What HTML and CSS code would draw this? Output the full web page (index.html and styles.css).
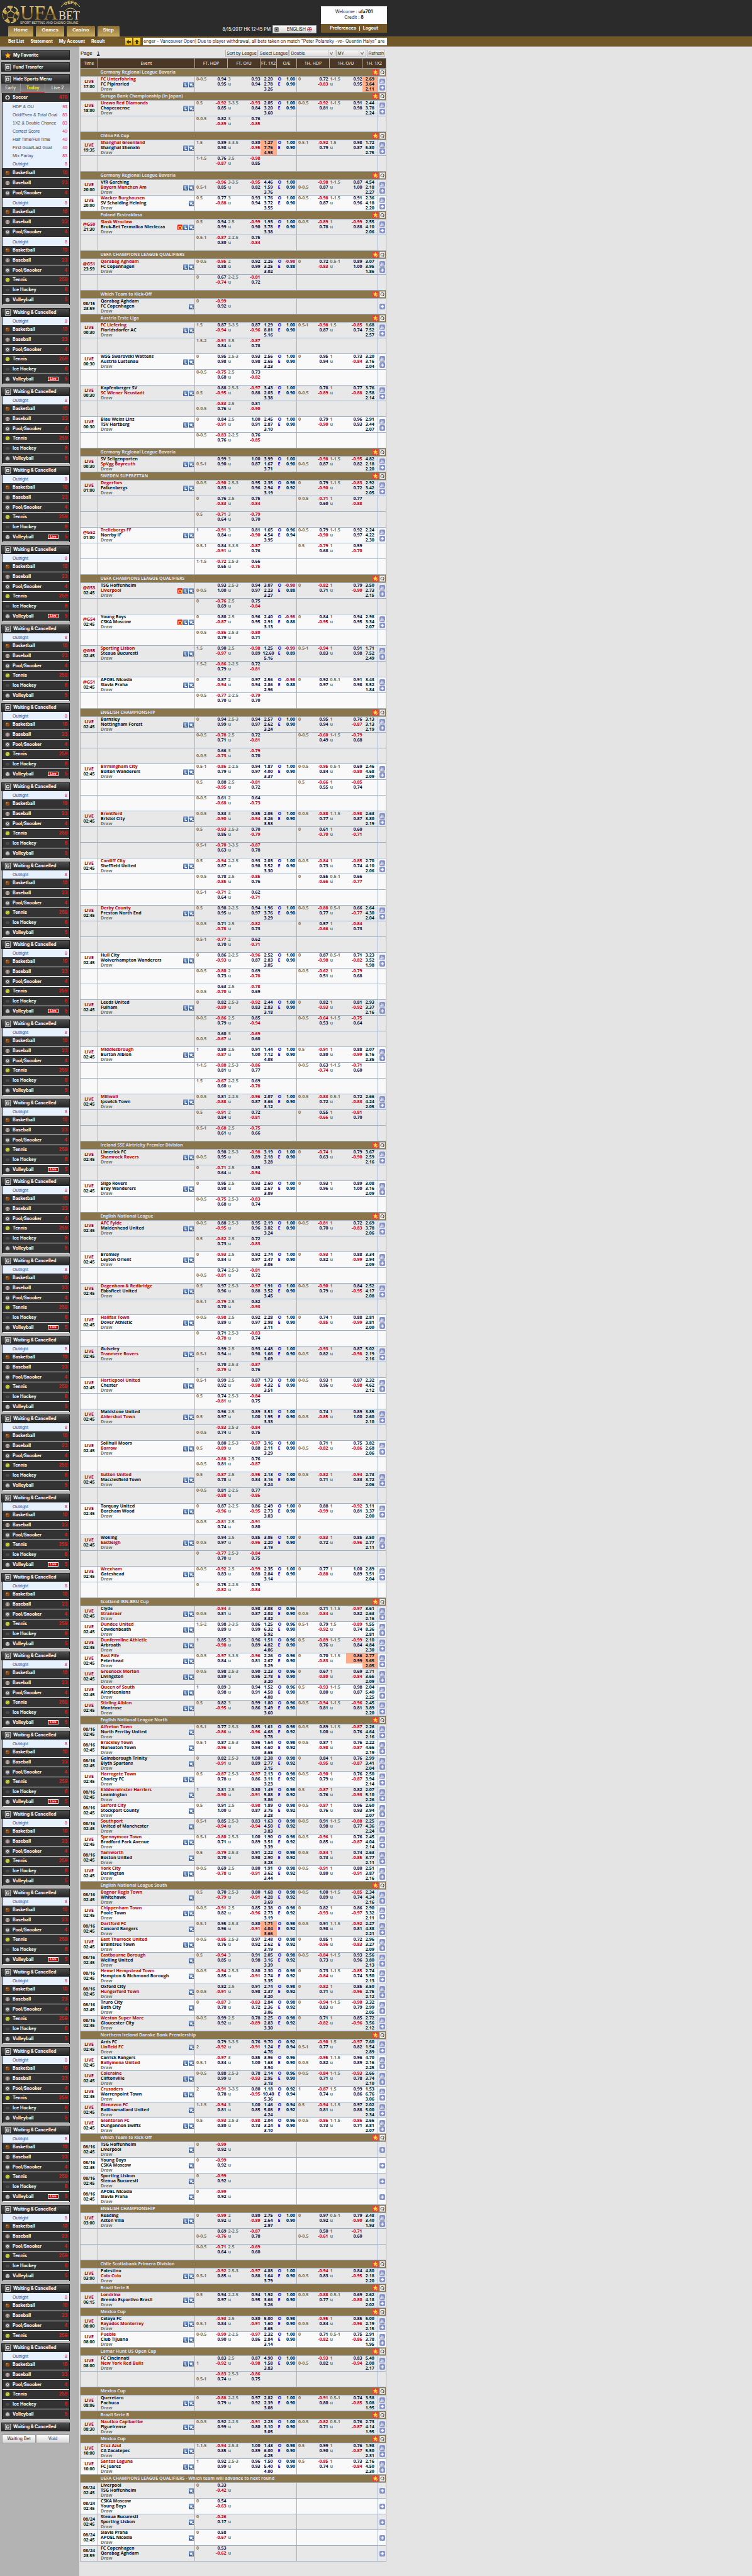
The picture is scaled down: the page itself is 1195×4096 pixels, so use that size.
FILE: index.html
```html
<!DOCTYPE html>
<html lang="en">
<head>
<meta charset="utf-8">
<title>UFABET - Sport betting and casino online</title>
<link rel="stylesheet" href="styles.css">
</head>
<body>
<svg class="defs" width="0" height="0" aria-hidden="true">
  <defs>
    <linearGradient id="gold" x1="0" y1="0" x2="0" y2="1">
      <stop offset="0" stop-color="#f3e3a0"/><stop offset=".45" stop-color="#d0ad52"/><stop offset=".6" stop-color="#7d5a1c"/><stop offset="1" stop-color="#ecd583"/>
    </linearGradient>
    <linearGradient id="blue" x1="0" y1="0" x2="0" y2="1">
      <stop offset="0" stop-color="#7f9ccb"/><stop offset="1" stop-color="#2f5590"/>
    </linearGradient>
  </defs>
  <symbol id="i-star" viewBox="0 0 13 14"><rect width="13" height="14" rx="1.5" fill="url(#blue)"/><path d="M6 1.5 7.3 5l3.7.1-2.9 2.3 1 3.6L6 8.9 3 11l1-3.600L1 5.100 4.700 5z" fill="#fff"/><path d="M8 10.500h5M10.500 8v5" stroke="#2f5590" stroke-width="3"/><path d="M8 10.500h5M10.500 8v5" stroke="#fff" stroke-width="1.500"/></symbol>
  <symbol id="i-l" viewBox="0 0 13 14"><rect width="13" height="14" rx="1.500" fill="url(#blue)"/><path d="M5 3v7.500h5" fill="none" stroke="#fff" stroke-width="1.800"/></symbol>
  <symbol id="i-tv" viewBox="0 0 13 14"><rect width="13" height="14" rx="1.500" fill="#e31b1b"/><path d="M2.500 5.500h8v6h-8zM4 2.500l1.500 3M9 2.500 7.500 5.500" fill="none" stroke="#ffd84a" stroke-width="1.600"/></symbol>
  <symbol id="i-stat" viewBox="0 0 14 14"><rect width="14" height="14" rx="3" fill="#8592cc"/><path d="M3 12V8M6 12V4M9 12V6M12 12v-2" stroke="#fff" stroke-width="1.700"/></symbol>
  <symbol id="i-plus" viewBox="0 0 14 14"><rect width="14" height="14" rx="3" fill="#8592cc"/><path d="M3 7h8M7 3v8" stroke="#fff" stroke-width="2.200"/></symbol>
  <symbol id="i-fav" viewBox="0 0 13 14"><rect width="13" height="14" rx="1" fill="#e8413f"/><path d="M6.500 1 8 5l4 .2-3.100 2.500L10 12 6.500 9.700 3 12l1.100-4.300L1 5.200 5 5z" fill="#ffe536"/><path d="m7 10 2 2 3-4" stroke="#ffe9a0" stroke-width="1.200" fill="none"/></symbol>
  <symbol id="i-refresh" viewBox="0 0 14 15"><rect x=".5" y=".5" width="13" height="14" fill="#f4f4f4" stroke="#c2c2c2"/><path d="M5 11.500C1.500 8 3.500 3.500 7 3.500s5.500 4 2.500 7" fill="none" stroke="#444" stroke-width="1.600"/><path d="M7.500 8v4h4z" fill="#444"/></symbol>
  <symbol id="i-down" viewBox="0 0 14 14"><rect x="1" y="1" width="12" height="12" fill="#333" stroke="#fff"/><rect x="3.500" y="3.500" width="7" height="7" fill="#eee"/><path d="M4.500 6h5L7 9z" fill="#222"/></symbol>
  <symbol id="i-right" viewBox="0 0 14 14"><rect x="1" y="1" width="12" height="12" fill="#333" stroke="#fff"/><rect x="3.500" y="3.500" width="7" height="7" fill="#eee"/><path d="M5.500 4.500v5L9 7z" fill="#222"/></symbol>
  <symbol id="i-gold" viewBox="0 0 18 18"><path d="m9 1 2.400 5.400 5.800.6-4.300 4 1.200 5.800L9 13.900 3.900 16.800 5.100 11 .8 7l5.800-.6z" fill="#ffb52b" stroke="#e87f10"/></symbol>
  <symbol id="b-soccer" viewBox="0 0 12 12"><circle cx="6" cy="6" r="5.500" fill="#ddd"/><path d="m6 3.500 2.500 1.800-1 3h-3l-1-3zM1 4l2-2M9 2l2 2M4 11h4" fill="#333" stroke="#333" stroke-width="1.200"/></symbol>
  <symbol id="b-basketball" viewBox="0 0 12 12"><circle cx="6" cy="6" r="5" fill="#9a5418"/><circle cx="4.500" cy="4" r="2" fill="#dc9a4c"/><path d="M1 6h10M6 1v10" stroke="#5a2b08" stroke-width=".7"/></symbol>
  <symbol id="b-baseball" viewBox="0 0 12 12"><circle cx="6" cy="6" r="5" fill="#b9aca8"/><path d="M3 2q3 4 0 8M9 2q-3 4 0 8" fill="none" stroke="#94605c" stroke-width=".8"/></symbol>
  <symbol id="b-pool" viewBox="0 0 12 12"><circle cx="6" cy="6" r="5.500" fill="#777"/><circle cx="6" cy="5.500" r="3" fill="#eee"/><circle cx="6" cy="5.500" r="1.200" fill="#333"/></symbol>
  <symbol id="b-tennis" viewBox="0 0 12 12"><circle cx="6" cy="6" r="5" fill="#b6c12c"/><path d="M2 8q4 0 7-5" fill="none" stroke="#eef3b0"/></symbol>
  <symbol id="b-hockey" viewBox="0 0 12 12"><ellipse cx="6" cy="6" rx="5" ry="3.500" fill="#4b4b4b"/></symbol>
  <symbol id="b-volley" viewBox="0 0 12 12"><circle cx="6" cy="6" r="5" fill="#a9a9a9"/><path d="M2 8q4-1 4-7M6 6q3 0 5 2" fill="none" stroke="#eee"/></symbol>
</svg>

<header class="head">
  <div class="head-in">
    <div class="brand">
      <svg class="logo" viewBox="0 0 134 41" role="img" aria-label="UFABET">
        <g fill="none" stroke="url(#gold)" stroke-width="1.500">
          <circle cx="17" cy="23" r="13" stroke-dasharray="9 2"/>
          <path d="m17 17 6 4-2 7h-8l-2-7zM17 17v-6M23 21l6-2M21 28l4 5M13 28l-4 5M11 21l-6-2"/>
        </g>
        <path d="m12 12 4-3 5 2-4 4zM5 20l3-5 3 3-2 5zM26 16l3 4-1 5-4-4zM9 30l4 0 3 5-5 0zM20 32l4-3 2 2-3 4z" fill="#c9a64c"/>
        <text x="32" y="31" class="l-ufa">UFA</text>
        <text x="93" y="31" class="l-bet">BET</text>
        <path d="M97 11A18 18 0 0 1 127 11" fill="none" stroke="#d8bd68"/>
        <path id="arc" d="M99 19A13 13 0 0 1 125 19" fill="none"/>
        <path d="M104 17A10 10 0 0 1 120 17" fill="none" stroke="#d8bd68"/>
        <text class="l-arc"><textPath href="#arc" startOffset="50%">UEFA</textPath></text>
        <text x="32" y="38" class="l-tag">SPORT BETTING AND CASINO ONLINE</text>
      </svg>
      <nav class="tabs"><a href="#">Home</a><a href="#">Games</a><a href="#">Casino</a><a href="#">Step</a></nav>
    </div>
    <div class="clock">
      <span>8/15/2017 HK 12:45 PM</span>
      <button type="button" class="lang">
        <svg class="lang-arrow" viewBox="0 0 8 10"><rect x=".5" y=".5" width="7" height="9" rx="1" fill="#8a8a8a" stroke="#555"/><path d="M3 3v4l2.500-2z" fill="#111"/></svg>
        <span>ENGLISH</span>
        <svg class="flag" viewBox="0 0 12 10"><rect width="12" height="10" fill="#28408c"/><path d="m0 0 12 10M12 0 0 10" stroke="#fff" stroke-width="2"/><path d="M6 0v10M0 5h12" stroke="#fff" stroke-width="3.500"/><path d="M6 0v10M0 5h12" stroke="#d0202c" stroke-width="2"/></svg>
      </button>
    </div>
    <div class="user">
      <div class="user-info"><div>Welcome : <b>ufa701</b></div><div>Credit : <b>8</b></div></div>
      <div class="user-links"><a href="#">Preferences</a><i></i><a href="#">Logout</a></div>
    </div>
  </div>
</header>
<div class="bar">
  <div class="bar-in">
    <nav class="menu"><a href="#">Bet List</a><a href="#">Statement</a><a href="#">My Account</a><a href="#">Result</a></nav>
    <div class="arrows">
      <button type="button" aria-label="Previous"><svg viewBox="0 0 10 10"><path d="M1 5l4-4v2.500h4v3H5V9z" fill="#3a2c00"/></svg></button>
      <button type="button" aria-label="Up"><svg viewBox="0 0 10 10"><path d="M5 1l4 4H6.500v4h-3V5H1z" fill="#3a2c00"/></svg></button>
    </div>
    <div class="ticker">enger - Vancouver Open] Due to player withdrawal, all bets taken on match "Peter Polansky -vs- Quentin Halys" are</div>
  </div>
</div>

<div class="page">
  <aside class="side" id="side">
    <a class="side-btn" href="#"><svg><use href="#i-gold"/></svg>My Favorite</a>
    <a class="side-btn" href="#"><svg><use href="#i-down"/></svg>Fund Transfer</a>
    <div class="sports">
      <a class="side-btn" href="#"><svg><use href="#i-right"/></svg>Hide Sports Menu</a>
      <div class="modes"><a href="#">Early</a><a href="#" class="on">Today</a><a href="#">Live 2</a></div>
    </div>
  </aside>
  <main class="main">
    <div class="tools">
      <span class="pager">Page <a href="#">1</a></span>
      <button type="button">Sort by League</button>
      <button type="button">Select League</button>
      <span class="pick wide"><select aria-label="View"><option>Double</option></select><svg viewBox="0 0 8 8"><path d="M2 2.500 4 6l2-3.500" fill="none" stroke="#777"/></svg></span>
      <span class="pick"><select aria-label="Odds type"><option>MY</option></select><svg viewBox="0 0 8 8"><path d="M2 2.500 4 6l2-3.500" fill="none" stroke="#777"/></svg></span>
      <button type="button">Refresh</button>
    </div>
    <table class="odds">
      <colgroup><col class="c-time"><col class="c-event"><col class="c-pair"><col class="c-pair"><col class="c-x"><col class="c-oe"><col class="c-pair"><col class="c-pair"><col class="c-hx"><col class="c-more"></colgroup>
      <thead><tr><th>Time</th><th>Event</th><th>FT. HDP</th><th>FT. O/U</th><th>FT. 1X2</th><th>O/E</th><th>1H. HDP</th><th>1H. O/U</th><th colspan="2">1H. 1X2</th></tr></thead>
      <tbody id="rows"></tbody>
    </table>
  </main>
</div>
<script src="app.js"></script>
</body>
</html>
```
FILE: styles.css
```css
* { box-sizing: border-box; }
body { margin: 0; min-height: 100vh; display: flex; flex-direction: column; background: #e4e4e4; font: 7px/8px Inter, "Liberation Sans", sans-serif; color: #222; }
a { color: inherit; text-decoration: none; }
button, select { font: inherit; color: inherit; margin: 0; }
svg { display: block; }
.defs { position: absolute; }

/* header */
.head { background: #2b2b2b; }
.head-in, .bar-in { max-width: 615px; display: flex; }
.head-in { align-items: flex-end; }
.brand { flex: 1; }
.logo { width: 134px; height: 41px; }
.l-ufa { font: 31px "Liberation Serif", serif; fill: url(#gold); }
.l-bet { font: 18px "Liberation Serif", serif; fill: #e6dcc0; }
.l-arc { font: bold 7px "Liberation Sans", sans-serif; fill: #e0c878; text-anchor: middle; }
.l-tag { font: 5px "Liberation Sans", sans-serif; fill: #e9e3d2; }
.tabs { display: flex; gap: 4px; padding-left: 13px; font: bold 8px/14px "Liberation Sans", sans-serif; color: #fff; }
.tabs a { height: 17px; padding: 0 9px; border-radius: 2px 2px 0 0; background: linear-gradient(#8a6a35, #c9ad62); }
.clock { display: flex; align-items: center; gap: 3px; padding-bottom: 5px; color: #fff; }
.lang { display: flex; align-items: center; width: 70px; height: 13px; padding: 0 2px; border: 1px solid #aaa; background: linear-gradient(#fafafa, #d8d8d8); color: #222; }
.lang-arrow { width: 7px; height: 8px; }
.lang span { flex: 1; text-align: right; padding-right: 2px; }
.flag { width: 8px; height: 7px; margin-right: 4px; }
.user { width: 105px; margin-left: 7px; padding-bottom: 6px; text-align: center; }
.user-info { padding: 5px 0; background: #fff; line-height: 8px; }
.user-info div { padding-bottom: 1px; }
.user-links { display: flex; justify-content: center; align-items: center; gap: 5px; height: 14px; background: #725728; color: #fff; font-weight: bold; }
.user-links i { width: 1px; height: 7px; background: #fff; }

.bar { background: #725728; border-top: 1px solid #7f6230; border-bottom: 1px solid #73502a; }
.bar-in { height: 14px; align-items: center; }
.menu { display: flex; gap: 10px; width: 199px; padding-left: 13px; color: #fff; font-weight: bold; white-space: nowrap; }
.arrows { display: flex; gap: 2px; width: 28px; }
.arrows button { width: 11px; height: 12px; padding: 1px; border: 0; background: linear-gradient(#ffe04a, #d9a400); }
.arrows svg { width: 9px; height: 9px; }
.ticker { flex: 1; height: 12px; line-height: 12px; background: #fff; overflow: hidden; white-space: nowrap; padding-left: 1px; }

/* sidebar */
.page { flex: 1; display: grid; grid-template-columns: 126px 1fr; }
.side { display: flex; flex-direction: column; padding: 6px 15px 0 2px; background: #b3b3b3; }
.side-btn { display: flex; align-items: center; gap: 3px; height: 15px; margin-bottom: 4px; padding-left: 4px; border: 1px solid #222; background: linear-gradient(#4d4d4d, #242424); color: #fff; font-weight: bold; }
.side-btn svg { width: 11px; height: 10px; }
.modes { display: grid; grid-template-columns: 3fr 4fr 4fr; height: 15px; line-height: 14px; background: linear-gradient(#6a6a6a, #8d8d8d); color: #fff; text-align: center; }
.modes a + a { border-left: 1px solid #999; }
.modes .on { color: #f4e800; font-weight: bold; border-bottom: 2px solid #e00000; }
.sports .side-btn, .group .side-btn { margin-bottom: 0; }
.group .side-btn { height: 14px; }
.group { margin-bottom: 5px; }
.group:nth-child(3n) { margin-bottom: 4px; }
.list { margin-left: 1px; border: solid #111; border-width: 0 1px; background: #333; }
.sub { display: flex; justify-content: space-between; height: 13px; line-height: 13px; padding: 0 3px 0 16px; background: #e6f1fd; color: #444; white-space: nowrap; font-family: "Liberation Sans", sans-serif; }
.sub em, .sport em { font-style: normal; color: #f01818; }
.rows { display: grid; grid-auto-rows: 1fr; }
.rows.n6 { height: 94px; }
.rows.n4 { height: 63px; }
.rows.n3 { height: 49px; }
.rows.n1 { height: 15px; }
.sport { display: flex; align-items: center; border-bottom: 1px solid #fff; padding: 0 3px 0 4px; color: #fff; font-weight: bold; }
.sport svg { width: 8px; height: 8px; margin-right: 4px; }
.sport em { margin-left: auto; min-width: 14px; text-align: right; }
.live { margin-left: auto; width: 17px; height: 7px; background: #e00000; border: 1px solid #fff; font: bold 5px/5px "Liberation Sans", sans-serif; text-align: center; }
.live + em { margin-left: 0; }
.ends { display: grid; grid-template-columns: 1fr 1fr; margin-left: 1px; }
.ends button { height: 14px; padding: 0; border: 1px solid #999; background: linear-gradient(#fff, #d8d8d8); }

/* odds table */
.main { padding: 5px 0 16px 1px; }
.tools { display: flex; align-items: center; gap: 1px; width: 485px; height: 11px; margin-bottom: 2px; font-family: "Liberation Sans", sans-serif; }
.tools > button, .pick { height: 11px; border: 1px solid #b5b5b5; background: linear-gradient(#f8f8f8, #dcdcdc); padding: 0 1px; white-space: nowrap; }
.pager { flex: 1; font-size: 8px; color: #000; padding-left: 1px; }
.pager a { text-decoration: underline; margin-left: 5px; }
.pick { display: flex; align-items: center; width: 48px; }
.pick.wide { width: 73px; }
.pick select { flex: 1; min-width: 0; height: 9px; padding: 0; border: 0; background: none; appearance: none; }
.pick svg { width: 10px; height: 9px; border-left: 1px solid #c4c4c4; }

.odds { width: 487px; table-layout: fixed; border-collapse: collapse; font: bold 7px/8px "Open Sans", "Noto Sans", sans-serif; color: #001028; }
.c-time { width: 28px; }
.c-event { width: 154px; }
.c-pair { width: 52px; }
.c-x { width: 26px; }
.c-oe { width: 32px; }
.c-hx { width: 25px; }
.c-more { width: 13px; }
.odds th { height: 16px; padding: 0; border: 1px solid #9fb0c6; background: #4b3726; color: #fff; font: 7px/8px "Open Sans", sans-serif; white-space: nowrap; }
.odds td { padding: 0; vertical-align: top; border-top: 1px solid #9fb0c6; border-bottom: 1px solid #9fb0c6; }
.league { height: 13px; background: #8b754b; color: #dfe3f5; }
.league td { vertical-align: middle; }
.league td:first-child { border-left: 1px solid #9fb0c6; }
.league td:last-child { border-right: 1px solid #9fb0c6; }
.league div { display: flex; align-items: center; height: 12px; padding-left: 4px; }
.league span { flex: 1; }
.league button { width: 10px; height: 10px; padding: 0; border: 0; background: none; margin-left: 1px; }
.league svg { width: 9px; height: 10px; }
.game { height: 25px; background: #e8e8e8; }
.game.alt { background: #f9f9f9; }
.game .edge { border-left: 1px solid #9fb0c6; }
.game .more { border-right: 1px solid #9fb0c6; }
.game .time { vertical-align: middle; text-align: center; }
.neg { color: #b40000; }
.event { display: flex; align-items: center; height: 24px; padding: 0 1px 0 4px; white-space: nowrap; }
.names { flex: 1; }
.mute, .ln { color: #707070; }
.event button, .more button { width: 8px; height: 9px; padding: 0; border: 0; background: none; margin-left: 1px; }
.event button svg, .more button svg { width: 100%; height: 9px; }
.pair { display: grid; grid-template-columns: 1fr 1fr; grid-auto-rows: 8px; padding: 0 2px; }
.pair.ou { padding: 0 0 0 1px; }
.pair a { text-align: right; }
.pair .ln { white-space: nowrap; }
.pair .o { color: #0a0ae6; }
.x { display: grid; grid-auto-rows: 8px; text-align: center; }
.hot { background: #ffad89; }
.more div { display: flex; flex-direction: column; align-items: center; justify-content: center; gap: 1px; height: 24px; }
.more button { width: 9px; margin: 0; }
```
FILE: app.js
```js
/* League lines start with "#", extra price lines with "+".
   Match: time | home | away | icons | hdp | ou | 1x2 | odd/even | 1H hdp | 1H ou | 1H 1x2
   "*" marks the favourite, "~" puts the handicap beside the away side, "!" highlights a changed price. */
const data = `
#Germany Regional League Bavaria
LIVE 17:00|*FC Unterfohring|FC Pipinsried|LS|0-0.5 .94 .95|3 .93 .94|2.20 2.78 3.26|1 .9|0 .72 -.83|1-1.5 .92 .95|2.69 3.64 2.11!
#Suruga Bank Championship (in Japan)
LIVE 18:00|*Urawa Red Diamonds|Chapecoense|LS|0.5 -.92 .85|3-3.5 -.93 .84|2.05 3.20 3.60|1 .9|0-0.5 -.92 .81|1-1.5 .91 .98|2.44 3.78 2.24
+|0-0.5 .82 -.89|3 .76 -.85
#China FA Cup
LIVE 19:35|*Shanghai Greenland|Shanghai Shenxin|LS|1.5 .89 .98|3-3.5 .80 -.95|1.27 7.76 4.98!|1 .9|0.5-1 -.92 .79|1.5 .98 .87|1.72 5.80 2.75
+|1-1.5 .76 -.87|3.5 -.98 .85
#Germany Regional League Bavaria
LIVE 20:00|VfR Garching|*Bayern Munchen Am|LS|~0.5-1 -.96 .85|3-3.5 -.95 .82|4.46 1.59 3.76|1 .9|~0-0.5 -.98 .87|1-1.5 .87 1|4.54 2.18 2.27
LIVE 20:00|*Wacker Burghausen|SV Schalding Heining|S|0.5 .77 -.88|3 .93 .94|1.76 3.72 3.55|1 .9|0-0.5 -.98 .87|1-1.5 .91 .96|2.36 4.18 2.20
#Poland Ekstraklasa
@G50 21:30|*Slask Wroclaw|Bruk-Bet Termalica Nieciecza|TLS|0.5 .94 .99|2.5 -.99 .90|1.93 3.78 3.38|1 .9|0-0.5 -.89 .78|1 -.99 .88|2.55 4.10 2.06
+|0.5-1 -.87 .80|2-2.5 .75 -.84
#UEFA CHAMPIONS LEAGUE QUALIFIERS
@G51 23:59|*Qarabag Aghdam|FC Copenhagen|LS|0-0.5 -.95 .88|2 .92 .99|2.26 3.25 3.02|-.98 .88|0 .72 -.83|0.5-1 .89 1|3.07 3.95 1.86
+|0 .67 -.74|2-2.5 -.81 .72
#Which Team to Kick-Off
08/15 23:59|Qarabag Aghdam|FC Copenhagen|S|0 -.99 .92|u
#Austria Erste Liga
LIVE 00:30|*FC Liefering|Floridsdorfer AC|LS|1.5 .87 -.94|3-3.5 .87 -.96|1.29 8.81 5.16|1 .9|0.5-1 -.98 .87|1.5 -.85 .74|1.68 7.52 2.57
+|1.5-2 -.91 .84|3.5 -.87 .78
LIVE 00:30|WSG Swarovski Wattens|Austria Lustenau|LS|0 .95 .98|2.5-3 .93 .98|2.56 2.65 3.23|1 .9|0 .95 .94|1 .73 -.84|3.20 3.16 2.04
+|0-0.5 -.75 .68|2.5 .73 -.82
LIVE 00:30|Kapfenberger SV|*SC Wiener Neustadt|LS|~0.5 .88 -.95|2.5-3 -.97 .88|3.43 2.03 3.38|1 .9|~0-0.5 .78 -.89|1 .77 -.88|3.76 2.58 2.14
+|~0-0.5 -.83 .76|2.5 .81 -.90
LIVE 00:30|Blau Weiss Linz|TSV Hartberg|LS|0 .84 -.91|2.5 1 .91|2.45 2.87 3.10|1 .9|0 .79 -.90|1 .96 .93|2.91 3.44 2.07
+|0-0.5 -.83 .76|2-2.5 .76 -.85
#Germany Regional League Bavaria
LIVE 00:30|SV Seligenporten|*SpVgg Bayreuth|LS|~0.5-1 .99 .90|3 1 .87|3.99 1.67 3.71|1 .9|~0-0.5 -.98 .87|1-1.5 -.95 .82|4.82 2.18 2.20
#SWEDEN SUPERETTAN
LIVE 01:00|*Degerfors|Falkenbergs|LS|0-0.5 -.90 .83|2.5-3 .95 .96|2.35 2.94 3.19|.98 .92|0 .79 -.90|1-1.5 -.83 .72|2.92 3.42 2.05
+|0 .76 -.83|2.5 .75 -.84|0-0.5 -.71 .60|1 .77 -.88
+|0.5 -.71 .64|3 -.79 .70
@G52 01:00|*Trelleborgs FF|Norrby IF|LS|1 -.91 .84|3 .81 -.90|1.65 4.54 3.95|.96 .94|0-0.5 .79 -.90|1-1.5 .92 .97|2.24 4.22 2.30
+|0.5-1 .84 -.91|3-3.5 -.87 .76|0.5 -.79 .68|1 .59 -.70
+|1-1.5 -.72 .65|2.5-3 .66 -.75
#UEFA CHAMPIONS LEAGUE QUALIFIERS
@G53 02:45|TSG Hoffenheim|*Liverpool|TLS|~0-0.5 .93 1|2.5-3 .94 .97|3.07 2.23 3.27|-.98 .88|0 -.82 .71|1 .79 -.90|3.50 2.73 2.15
+|0 -.76 .69|2.5 .75 -.84
@G54 02:45|Young Boys|CSKA Moscow|TLS|0 .80 -.87|2.5 .96 .95|2.40 2.91 3.13|-.98 .88|0 .84 -.95|1 .94 .95|2.98 3.34 2.07
+|0-0.5 -.86 .79|2.5-3 -.80 .71
@G55 02:45|*Sporting Lisbon|Steaua Bucuresti|LS|1.5 .90 -.97|2.5 -.98 .89|1.25 12.60 5.16|-.99 .89|0.5-1 -.94 .83|1 .91 .98|1.71 7.52 2.49
+|1.5-2 -.86 .79|2-2.5 .72 -.81
@G51 02:45|APOEL Nicosia|Slavia Praha|LS|0 .87 -.94|2 .97 .94|2.56 2.86 2.96|-.98 .88|0 .92 .97|0.5-1 .91 .98|3.43 3.52 1.84
+|0-0.5 -.77 .70|2-2.5 -.79 .70
#ENGLISH CHAMPIONSHIP
LIVE 02:45|Barnsley|Nottingham Forest|LS|0 .94 .99|2.5-3 .94 .97|2.57 2.62 3.24|1 .9|0 .95 .94|1 .76 -.87|3.13 3.13 2.19
+|0-0.5 -.78 .71|2.5 .72 -.81|0-0.5 -.60 .49|1-1.5 -.79 .68
+|~0-0.5 .66 -.73|3 -.79 .70
LIVE 02:45|*Birmingham City|Bolton Wanderers|LS|0.5-1 -.86 .79|2-2.5 .94 .97|1.87 4.00 3.37|1 .9|0-0.5 -.95 .84|0.5-1 .69 -.80|2.46 4.68 2.09
+|0.5 .88 -.95|2.5 -.81 .72|0.5 -.66 .55|1 -.85 .74
+|0-0.5 .61 -.68|2 .64 -.73
LIVE 02:45|*Brentford|Bristol City|LS|0-0.5 .83 -.90|3 .85 -.94|2.05 3.26 3.53|1 .9|0-0.5 -.88 .77|1-1.5 -.98 .87|2.63 3.80 2.19
+|0.5 -.93 .86|2.5-3 .70 -.79|0 .61 -.70|1 .60 -.71
+|0.5-1 -.70 .63|3-3.5 -.87 .78
LIVE 02:45|*Cardiff City|Sheffield United|LS|0.5 -.94 .87|2-2.5 .93 .98|2.03 3.52 3.30|1 .9|0-0.5 -.84 .73|1 -.85 .74|2.70 4.10 2.06
+|0-0.5 .78 -.85|2.5 -.85 .76|0 .55 -.66|0.5-1 .66 -.77
+|0.5-1 -.71 .64|2 .62 -.71
LIVE 02:45|*Derby County|Preston North End|LS|0.5 .98 .95|2-2.5 .94 .97|1.96 3.76 3.29|1 .9|0-0.5 -.88 .77|0.5-1 .66 -.77|2.64 4.30 2.04
+|0-0.5 .71 -.78|2.5 -.82 .73|0 .57 -.66|1 -.84 .73
+|0.5-1 -.77 .70|2 .62 -.71
LIVE 02:45|Hull City|Wolverhampton Wanderers|LS|0 .86 -.93|2-2.5 -.96 .87|2.52 2.83 3.05|1 .9|0 .87 -.98|0.5-1 .71 -.82|3.23 3.52 1.98
+|0-0.5 -.80 .73|2 .69 -.78|0-0.5 -.62 .51|1 -.79 .68
+|~0-0.5 .63 -.70|2.5 -.78 .69
LIVE 02:45|Leeds United|Fulham|LS|0 .82 -.89|2.5-3 -.92 .83|2.44 2.83 3.18|1 .9|0 .82 -.93|1 .81 -.92|2.93 3.37 2.16
+|0-0.5 -.86 .79|2.5 .85 -.94|0-0.5 -.64 .53|1-1.5 -.75 .64
+|~0-0.5 .60 -.67|3 -.69 .60
LIVE 02:45|*Middlesbrough|Burton Albion|LS|1 .80 -.87|2.5 .91 1|1.44 7.12 4.08|1 .9|0.5 -.91 .80|1 .88 -.99|2.07 5.16 2.35
+|1-1.5 -.88 .81|2.5-3 -.86 .77|0-0.5 .63 -.74|1-1.5 -.71 .60
+|1.5 -.67 .60|2-2.5 .69 -.78
LIVE 02:45|*Millwall|Ipswich Town|LS|0-0.5 .81 -.88|2-2.5 -.96 .87|2.07 3.66 3.12|1 .9|0-0.5 -.83 .72|0.5-1 .72 -.83|2.66 4.24 2.05
+|0.5 -.91 .84|2 .72 -.81|0 .55 -.66|1 -.81 .70
+|0.5-1 -.68 .61|2.5 -.75 .66
#Ireland SSE Airtricity Premier Division
LIVE 02:45|Limerick FC|*Shamrock Rovers|LS|~0-0.5 .98 .95|2.5-3 -.98 .89|3.19 2.18 3.28|1 .9|0 -.74 .63|1 .79 -.90|3.67 2.59 2.16
+|0 -.71 .64|2.5 .85 -.94
LIVE 02:45|Sligo Rovers|Bray Wanderers|LS|0 .95 .98|2.5 .93 .98|2.60 2.67 3.09|1 .9|0 .93 .96|1 .89 1|3.08 3.16 2.09
+|0-0.5 -.75 .68|2.5-3 -.83 .74
#English National League
LIVE 02:45|*AFC Fylde|Maidenhead United|LS|0-0.5 .88 -.95|2.5-3 .95 .96|2.19 3.02 3.24|1 .9|0-0.5 -.81 .70|1 .72 -.83|2.69 3.78 2.06
+|0.5 -.82 .73|2.5 .72 -.83
LIVE 02:45|Bromley|Leyton Orient|LS|0 -.93 .84|2.5 .92 .97|2.74 2.47 3.05|1 .9|0 -.93 .82|1 .88 -.99|3.34 2.94 2.09
+|~0-0.5 .74 -.81|2.5-3 -.81 .72
LIVE 02:45|*Dagenham & Redbridge|Ebbsfleet United|LS|0.5 .97 .96|2.5-3 -.97 .88|1.91 3.52 3.45|1 .9|0-0.5 -.90 .79|1 .84 -.95|2.52 4.17 2.08
+|0.5-1 -.79 .70|2.5 .82 -.93
LIVE 02:45|*Halifax Town|Dover Athletic|LS|0-0.5 -.98 .89|2.5 .92 .97|2.28 2.98 3.11|1 .9|0 .74 -.85|1 .88 -.99|2.81 3.81 2.00
+|0 .71 -.78|2.5-3 -.83 .74
LIVE 02:45|Guiseley|*Tranmere Rovers|LS|~0.5-1 .99 .94|2.5 .93 .98|4.48 1.66 3.69|1 .9|~0-0.5 -.93 .82|1 .87 -.98|5.02 2.19 2.16
+|~1 .70 -.79|2.5-3 -.87 .76
LIVE 02:45|*Hartlepool United|Chester|LS|0.5-1 .99 .92|2.5 .87 -.98|1.73 4.32 3.51|1 .9|0-0.5 .93 .96|1 .87 -.98|2.32 4.62 2.12
+|0.5 .74 -.81|2.5-3 -.84 .75
LIVE 02:45|Maidstone United|*Aldershot Town|LS|~0.5 .96 .97|2.5 .89 1|3.51 1.95 3.33|1 .9|~0-0.5 .74 -.85|1 .89 1|3.85 2.60 2.10
+|~0-0.5 -.83 .74|2.5-3 -.84 .75
LIVE 02:45|Solihull Moors|*Barrow|LS|~0.5 .80 -.89|2.5-3 -.97 .88|3.16 2.11 3.29|1 .9|~0-0.5 .71 -.82|1 .75 -.86|3.82 2.68 2.06
+|~0-0.5 -.88 .81|2.5 .76 -.87
LIVE 02:45|*Sutton United|Macclesfield Town|LS|0.5 -.87 .78|2.5 -.95 .84|2.13 3.16 3.24|1 .9|0-0.5 -.82 .71|1 -.94 .83|2.73 3.72 2.06
+|0-0.5 .81 -.88|2-2.5 .77 -.86
LIVE 02:45|Torquay United|Boreham Wood|LS|0 .87 -.96|2-2.5 .86 -.95|2.49 2.73 3.03|1 .9|0 .88 -.99|1 -.92 .81|3.11 3.37 2.00
+|0-0.5 -.81 .74|2.5 -.91 .80
LIVE 02:45|Woking|*Eastleigh|LS|~0-0.5 .94 .97|2.5 .85 -.96|3.05 2.20 3.19|1 .9|0 -.83 .72|1 .85 -.96|3.50 2.77 2.11
+|0 -.77 .70|2.5-3 -.84 .75
LIVE 02:45|*Wrexham|Gateshead|LS|0-0.5 -.92 .83|2.5 -.99 .88|2.35 2.84 3.14|1 .9|0 .77 -.88|1 1 .89|2.89 3.51 2.04
+|0 .75 -.82|2-2.5 .75 -.84
#Scotland IRN-BRU Cup
LIVE 02:45|Clyde|*Stranraer|LS|~0-0.5 -.94 .81|3 .98 .87|3.08 2.02 3.32|.96 .90|~0-0.5 .71 -.84|1-1.5 -.97 .82|3.61 2.63 2.16
LIVE 02:45|*Dundee United|Cowdenbeath|LS|1.5-2 .98 .89|3-3.5 .86 .99|1.25 6.32 5.92|.96 .90|0.5-1 .79 -.92|1.5 -.89 .74|1.55 8.36 2.81
LIVE 02:45|*Dunfermline Athletic|Arbroath|LS|1 .85 -.98|3 .96 .89|1.51 4.82 4.06|.96 .90|0.5 -.89 .76|1-1.5 -.99 .84|2.10 4.84 2.30
LIVE 02:45|*East Fife|Peterhead|LS|0-0.5 -.97 .84|3-3.5 -.96 .81|2.26 2.67 3.29|.96 .90|0 .70 -.83|1-1.5 .86 .99!|2.77 3.65 2.05!
LIVE 02:45|*Greenock Morton|Livingston|LS|0-0.5 .98 .89|2.5-3 .90 .95|2.23 2.78 3.20|.96 .90|0 .67 -.80|1 .69 -.84|2.71 3.65 2.09
LIVE 02:45|*Queen of South|Airdrieonians|LS|1 .89 .98|3 .94 .91|1.52 4.58 4.08|.96 .90|0.5 -.93 .80|1-1.5 .98 .87|2.04 5.40 2.25
LIVE 02:45|*Stirling Albion|Montrose|LS|0.5 .82 -.95|3 .99 .86|1.80 3.49 3.60|.96 .90|0-0.5 -.94 .81|1-1.5 -.96 .81|2.45 3.89 2.20
#English National League North
08/16 02:45|*Alfreton Town|North Ferriby United|S|0.5-1 .77 -.86|2.5-3 .85 -.96|1.61 4.68 3.78|.98 .92|0-0.5 .89 1|1-1.5 -.87 .76|2.26 4.64 2.16
08/16 02:45|*Brackley Town|Nuneaton Town|S|0.5-1 .87 -.96|2.5-3 .95 .94|1.64 4.60 3.65|.98 .92|0-0.5 .87 -.98|1 .76 -.87|2.22 4.66 2.19
08/16 02:45|Gainsborough Trinity|Blyth Spartans|S|0 .82 -.91|2.5-3 1 .89|2.38 2.77 3.15|.98 .92|0 .84 -.95|1 .76 -.87|2.99 3.41 2.04
LIVE 02:45|*Harrogate Town|Chorley FC|LS|0.5 -.87 .78|2.5-3 -.97 .86|2.13 3.11 3.23|.98 .92|0-0.5 -.90 .79|1 .76 -.87|2.50 3.94 2.14
08/16 02:45|*Kidderminster Harriers|Leamington|S|1 .81 -.90|2.5 .80 -.91|1.49 5.88 3.86|.98 .92|0.5 -.87 .76|1 .82 -.93|2.07 5.10 2.26
08/16 02:45|*Salford City|Stockport County|S|0.5 .91 1|2.5 -.98 .87|1.89 3.75 3.28|.98 .92|0-0.5 -.87 .76|1 .96 .93|2.60 3.94 2.07
08/16 02:45|*Southport|United of Manchester|S|0.5-1 .85 -.94|2.5-3 .83 -.94|1.63 4.50 3.83|.98 .92|0-0.5 .91 .98|1-1.5 -.88 .77|2.25 4.36 2.24
LIVE 02:45|*Spennymoor Town|Bradford Park Avenue|LS|0.5-1 -.80 .71|2.5-3 1 .89|1.90 3.51 3.39|.98 .92|0-0.5 -.96 .85|1 .76 -.87|2.45 4.04 2.14
08/16 02:45|*Tamworth|Boston United|S|0.5 -.79 .70|2.5-3 .91 .98|2.22 2.90 3.28|.98 .92|0-0.5 -.84 .73|1 .74 -.85|2.63 3.77 2.11
LIVE 02:45|*York City|Darlington|LS|0-0.5 .69 -.78|2.5 .80 -.91|1.91 3.62 3.44|.98 .92|0-0.5 -.91 .80|1 .80 -.91|2.51 3.87 2.16
#English National League South
08/16 02:45|*Bognor Regis Town|Whitehawk|S|0.5 .70 -.79|2.5-3 .80 -.91|1.68 4.28 3.69|.98 .92|0-0.5 1 .89|1-1.5 -.85 .74|2.34 4.34 2.16
LIVE 02:45|*Chippenham Town|Poole Town|LS|0-0.5 -.91 .82|2.5 .85 -.96|2.38 2.73 3.19|.98 .92|0 .82 -.93|1 .86 -.97|2.90 3.32 2.11
08/16 02:45|*Dartford FC|Concord Rangers|S|0.5-1 .95 .96|2.5-3 .80 -.91|1.71 4.04 3.66!|.98 .92|0-0.5 .91 .98|1-1.5 -.92 .81|2.27 4.38 2.21
LIVE 02:45|*East Thurrock United|Braintree Town|LS|0-0.5 -.85 .76|2.5-3 .97 .92|2.48 2.62 3.19|.98 .92|0 .85 -.96|1 .72 -.83|2.96 3.27 2.09
08/16 02:45|*Eastbourne Borough|Welling United|S|0.5 -.94 .85|3 .91 .98|2.05 3.16 3.39|.98 .92|0-0.5 -.84 .73|1-1.5 .93 .96|2.56 3.80 2.13
08/16 02:45|*Hemel Hempstead Town|Hampton & Richmond Borough|S|0-0.5 -.94 .85|2.5-3 .80 -.91|2.30 2.74 3.35|.98 .92|0 .73 -.84|1-1.5 -.85 .74|2.74 3.50 2.13
08/16 02:45|Oxford City|*Hungerford Town|S|~0-0.5 .82 -.91|2.5 .91 .98|2.74 2.37 3.20|.98 .92|0 -.82 .71|1 .85 -.96|3.50 2.75 2.12
08/16 02:45|Truro City|Bath City|S|0 -.87 .78|3 -.83 .72|2.84 2.36 3.06|.98 .92|0 -.94 .83|1-1.5 -.90 .79|3.32 2.99 2.05
08/16 02:45|*Weston Super Mare|Gloucester City|S|0-0.5 .99 .92|2.5 .78 -.89|2.25 2.83 3.30|.98 .92|0 .71 -.82|1 .85 -.96|2.72 3.56 2.12
#Northern Ireland Danske Bank Premiership
LIVE 02:45|Ards FC|*Linfield FC|S|~2 .79 -.92|3-3.5 .76 -.91|9.70 1.24 4.76|.92 .94|~0.5-1 -.90 .77|1.5 -.97 .82|7.60 1.54 2.89
LIVE 02:45|Carrick Rangers|*Ballymena United|LS|~0.5-1 -.97 .84|3 .85 1|3.96 1.63 3.94|.96 .90|~0-0.5 -.95 .82|1-1.5 .96 .89|4.70 2.16 2.25
LIVE 02:45|*Coleraine|Cliftonville|LS|0-0.5 .88 .99|2.5-3 .78 -.93|2.14 2.95 3.18|.96 .90|0-0.5 -.84 .71|1-1.5 -.93 .78|2.66 3.74 2.10
LIVE 02:45|*Crusaders|Warrenpoint Town|LS|2 -.91 .78|3-3.5 .80 -.95|1.18 10.40 5.36|.92 .94|1 -.87 .74|1.5 .99 .86|1.53 6.76 3.06
LIVE 02:45|*Glenavon FC|Ballinamallard United|S|1-1.5 -.94 .81|3 1 .85|1.46 5.08 4.24|.94 .92|0.5 -.94 .81|1-1.5 .97 .88|2.02 5.00 2.34
LIVE 02:45|*Glentoran FC|Dungannon Swifts|LS|0.5 -.93 .80|2.5-3 -.88 .73|2.04 3.24 3.10|.96 .90|0-0.5 -.86 .73|1-1.5 -.86 .71|2.66 3.81 2.07
#Which Team to Kick-Off
08/16 02:45|TSG Hoffenheim|Liverpool|S|0 -.99 .92|u
08/16 02:45|Young Boys|CSKA Moscow|S|0 -.99 .92|u
08/16 02:45|Sporting Lisbon|Steaua Bucuresti|S|0 -.99 .92|u
08/16 02:45|APOEL Nicosia|Slavia Praha|S|0 -.99 .92|u
#ENGLISH CHAMPIONSHIP
LIVE 03:00|Reading|Aston Villa|LS|0 -.99 .92|2 .80 -.89|2.75 2.64 2.97|1 .9|0 .97 .92|0.5-1 .79 -.90|3.48 3.40 1.93
+|~0-0.5 .69 -.76|2-2.5 -.87 .78|~0-0.5 .50 -.61|1 -.71 .60
+|0-0.5 -.71 .64|2.5 -.69 .60
#Chile Scotiabank Primera Division
LIVE 03:00|Palestino|*Colo Colo|LS|~0.5-1 -.92 .85|2.5-3 -.97 .88|4.88 1.64 3.79|1 .9|~0-0.5 -.94 .83|1 .84 -.95|4.80 2.18 2.20
#Brazil Serie B
LIVE 06:15|*Londrina|Gremio Esportivo Brasil|LS|0.5 .94 .97|2-2.5 .94 .95|1.92 3.66 3.26|1 .9|0-0.5 -.88 .77|0.5-1 .69 -.80|2.62 4.18 2.02
#Mexico Cup
LIVE 08:00|Celaya FC|*Rayados Monterrey|LS|~0.5-1 -.93 .84|2.5 .80 -.91|5.00 1.60 3.65|.98 .90|~0-0.5 -.95 .84|1 .85 -.96|5.00 2.19 2.15
LIVE 08:00|*Puebla|Club Tijuana|LS|0-0.5 -.99 .90|2-2.5 -.97 .86|2.32 2.84 3.14|1 .9|0 .71 -.82|0.5-1 .75 -.86|2.91 3.78 1.95
#Lamar Hunt US Open Cup
LIVE 08:00|FC Cincinnati|*New York Red Bulls|LS|~1 .83 -.92|2.5 .87 -.98|4.90 1.58 3.83|1 .9|~0-0.5 -.93 .82|1 .83 -.94|5.48 2.08 2.17
+|~0.5-1 -.83 .74|2.5-3 -.86 .75
#Mexico Cup
LIVE 08:06|Queretaro|Pachuca|LS|0 -.88 .79|2-2.5 .97 .92|2.82 2.39 3.08|1 .9|0 -.91 .80|0.5-1 .74 -.85|3.58 3.08 1.95
#Brazil Serie B
LIVE 08:30|*Nautico Capibaribe|Figueirense|LS|0-0.5 .92 .99|2-2.5 -.91 .80|2.23 3.10 3.05|1 .9|0-0.5 -.82 .71|0.5-1 .76 -.87|2.73 4.14 1.95
#Mexico Cup
LIVE 10:00|*Cruz Azul|CA Zacatepec|LS|1-1.5 -.94 .85|2.5-3 1 .89|1.43 6.00 4.25|.98 .90|0.5 .99 .90|1 .76 -.87|1.98 5.50 2.31
LIVE 10:00|*Santos Laguna|FC Juarez|LS|1 .92 .99|2.5-3 .96 .93|1.50 5.40 4.00|.98 .90|0.5 -.85 .74|1 .73 -.84|2.16 4.50 2.30
#UEFA CHAMPIONS LEAGUE QUALIFIERS - Which team will advance to next round
08/24 02:45|Liverpool|TSG Hoffenheim|S|0 .33 -.42|u
08/24 02:45|CSKA Moscow|Young Boys|S|0 .54 -.63|u
08/24 02:45|Steaua Bucuresti|Sporting Lisbon|S|0 -.26 .17|u
08/24 02:45|Slavia Praha|APOEL Nicosia|S|0 .58 -.67|u
08/24 23:59|FC Copenhagen|Qarabag Aghdam|S|0 .53 -.62|u
`.trim().split("\n");

const icon = id => `<svg aria-hidden="true"><use href="#${id}"/></svg>`;
const price = (v, hot) => `<a href="#" class="${v < 0 ? "neg" : ""}${hot ? " hot" : ""}">${Number(v).toFixed(2)}</a>`;

function hdp(s, edge) {
  let body = "";
  if (s) {
    const [line, a, b] = s.replace("~", "").split(" ");
    const away = s[0] === "~";
    body = `<div class="pair"><span class="ln">${away ? "" : line}</span>${price(a)}<span class="ln">${away ? line : ""}</span>${price(b)}</div>`;
  }
  return `<td class="${edge}">${body}</td>`;
}
function ou(s) {
  if (!s) return "<td></td>";
  if (s === "u") return `<td><div class="pair ou"><span></span><span></span><span class="mute">u</span></div></td>`;
  const hot = s.endsWith("!");
  const [line, a, b] = s.replace("!", "").split(" ");
  return `<td><div class="pair ou"><span class="ln">${line}</span>${price(a, hot)}<span class="mute">u</span>${price(b, hot)}</div></td>`;
}
function x12(s) {
  if (!s) return "<td></td>";
  const hot = s.endsWith("!");
  return `<td class="${hot ? "hot" : ""}"><div class="x">${s.replace("!", "").split(" ").map(v => price(v)).join("")}</div></td>`;
}
function oe(s) {
  if (!s) return "<td></td>";
  const [a, b] = s.split(" ");
  return `<td><div class="pair"><span class="o">O</span>${price(a)}<span class="o">E</span>${price(b)}</div></td>`;
}
const team = n => n[0] === "*" ? `<div class="neg">${n.slice(1)}</div>` : `<div>${n}</div>`;
const ids = { T: ["i-tv", "Live TV"], L: ["i-l", "Live"], S: ["i-star", "Add to favourites"] };

let n = 0, out = "";
for (const row of data) {
  if (row[0] === "#") {
    n = 0;
    out += `<tr class="league"><td></td><td colspan="9"><div><span>${row.slice(1)}</span><button type="button" aria-label="Favourite league">${icon("i-fav")}</button><button type="button" aria-label="Refresh league">${icon("i-refresh")}</button></div></td></tr>`;
    continue;
  }
  const f = row.replace("&", "&amp;").split("|");
  if (row[0] === "+") {
    out += `<tr class="game${n % 2 ? "" : " alt"}"><td class="edge"></td><td class="edge"></td>${hdp(f[1], "edge")}${ou(f[2])}<td></td><td></td>${hdp(f[3], "edge")}${ou(f[4])}<td></td><td class="edge more"></td></tr>`;
    continue;
  }
  n++;
  const [d, t] = f[0].split(" ");
  const icons = [...f[3]].map(k => `<button type="button" aria-label="${ids[k][1]}">${icon(ids[k][0])}</button>`).join("");
  out += `<tr class="game${n % 2 ? "" : " alt"}"><td class="edge time"><div class="${/^[L@]/.test(d) ? "neg" : ""}">${d}</div><div>${t}</div></td>` +
    `<td class="edge"><div class="event"><div class="names">${team(f[1])}${team(f[2])}<div class="mute">Draw</div></div>${icons}</div></td>` +
    hdp(f[4], "edge") + ou(f[5]) + x12(f[6]) + oe(f[7]) + hdp(f[8], "edge") + ou(f[9]) + x12(f[10]) +
    `<td class="edge more"><div>${f[6] ? `<button type="button" aria-label="Statistics">${icon("i-stat")}</button>` : ""}<button type="button" aria-label="More bets">${icon("i-plus")}</button></div></td></tr>`;
}
document.getElementById("rows").innerHTML = out;

/* sports menu */
const sports = [["basketball", "Basketball", 10], ["baseball", "Baseball", 23], ["pool", "Pool/Snooker", 4], ["tennis", "Tennis", 259], ["hockey", "Ice Hockey", 8], ["volley", "Volleyball", 5]];
const sub = (name, count) => `<a href="#" class="sub">${name}<em>${count}</em></a>`;
const sport = ([id, name, count], live) => `<a href="#" class="sport">${icon("b-" + id)}${name}${live ? '<span class="live">Live</span>' : ""}<em>${count}</em></a>`;
const block = (count, live) => `<div class="rows n${count}">${sports.slice(0, count).map((s, i) => sport(s, live && i === 5)).join("")}</div>`;
const waiting = `<a class="side-btn" href="#">${icon("i-down")}Waiting &amp; Cancelled</a>`;

const first = [["HDP &amp; OU", 93], ["Odd/Even &amp; Total Goal", 83], ["1X2 &amp; Double Chance", 83], ["Correct Score", 40], ["Half Time/Full Time", 40], ["First Goal/Last Goal", 40], ["Mix Parlay", 83], ["Outright", 8]];
let menu = `<div class="group"><div class="list"><div class="rows n1">${sport(["soccer", "Soccer", 470])}</div>${first.map(s => sub(...s)).join("")}${block(3)}${sub("Outright", 8)}${block(3)}${sub("Outright", 8)}${block(6)}</div></div>`;
const liveFlags = "1011010010101001011010010101";
const shortGroup = 25;
for (let i = 0; i < 27; i++) menu += `<div class="group">${waiting}<div class="list">${sub("Outright", 8)}${block(i === shortGroup ? 4 : 6, liveFlags[i] === "1")}</div></div>`;
menu += `<div class="group">${waiting}</div><div class="ends"><button type="button">Waiting Bet</button><button type="button">Void</button></div>`;
document.getElementById("side").insertAdjacentHTML("beforeend", menu);
```
